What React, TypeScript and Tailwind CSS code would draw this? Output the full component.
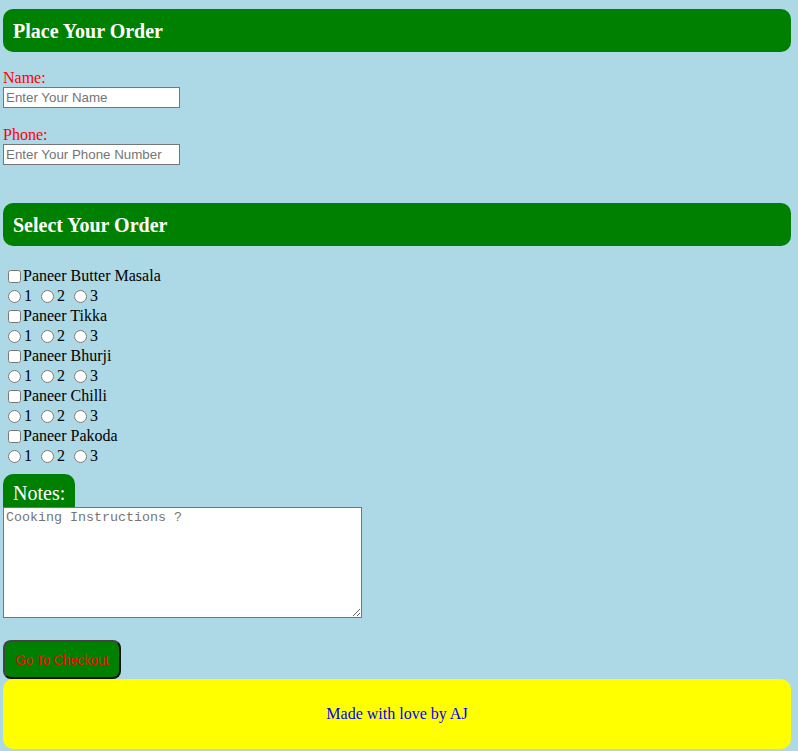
import React from "react"

const dishes = ["Paneer Butter Masala", "Paneer Tikka", "Paneer Bhurji", "Paneer Chilli", "Paneer Pakoda"]

function Header({ title }: { title: string }) {
  return (
    <h3 className="flex h-[43px] items-center rounded-[10px] bg-[#008000] pl-[10px] text-[20px] font-bold text-white">
      {title}
    </h3>
  )
}

export default function App() {
  return (
    <div className="min-h-screen bg-[#add8e6] pl-[3px] pr-[7px] pt-[9px] font-['Liberation_Serif',serif] text-[16px] leading-[18px] text-black">
      <Header title="Place Your Order" />

      <div className="mt-[17px]">
        <label className="block text-[#ff0000]">Name:</label>
        <input
          type="text"
          placeholder="Enter Your Name"
          className="block h-[21px] w-[177px] border border-[#767676] bg-white px-[2px] font-['Liberation_Sans',sans-serif] text-[13.33px] placeholder:text-[#757575]"
        />
      </div>

      <div className="mt-[18px]">
        <label className="block text-[#ff0000]">Phone:</label>
        <input
          type="text"
          placeholder="Enter Your Phone Number"
          className="block h-[21px] w-[177px] border border-[#767676] bg-white px-[2px] font-['Liberation_Sans',sans-serif] text-[13.33px] placeholder:text-[#757575]"
        />
      </div>

      <div className="mt-[38px]">
        <Header title="Select Your Order" />
      </div>

      <div className="mt-[20px] pl-[5px]">
        {dishes.map((dish) => (
          <div key={dish}>
            <div className="flex h-[20px] items-center">
              <input type="checkbox" className="m-0 h-[13px] w-[13px]" />
              <span className="ml-[2px]">{dish}</span>
            </div>
            <div className="flex h-[20px] items-center">
              {[1, 2, 3].map((n) => (
                <label key={n} className="mr-[9px] flex items-center">
                  <input type="radio" name={dish} className="m-0 h-[13px] w-[13px]" />
                  <span className="ml-[3px]">{n}</span>
                </label>
              ))}
            </div>
          </div>
        ))}
      </div>

      <div className="mt-[8px]">
        <div className="inline-flex h-[33px] items-end rounded-t-[10px] bg-[#008000] px-[10px] pb-[2px] text-[20px] leading-[24px] text-white">
          Notes:
        </div>
        <textarea
          placeholder="Cooking Instructions ?"
          className="block h-[111px] w-[359px] border border-[#767676] bg-white px-[2px] py-[2px] font-['Liberation_Mono',monospace] text-[13.33px] leading-[15px] placeholder:text-[#757575]"
        />
      </div>

      <button className="mt-[22px] flex h-[39px] w-[118px] items-center justify-center rounded-[8px] border-2 border-t-[#444] border-l-[#444] border-r-[#111] border-b-[#111] bg-[#008000] font-['Liberation_Sans',sans-serif] text-[14px] text-[#ff0000]">
        <span className="inline-block scale-x-[0.93]">Go To Checkout</span>
      </button>

      <footer className="flex h-[70px] items-center justify-center rounded-[10px] bg-[#ffff00] text-[#0000ff]">
        Made with love by AJ
      </footer>
    </div>
  )
}
